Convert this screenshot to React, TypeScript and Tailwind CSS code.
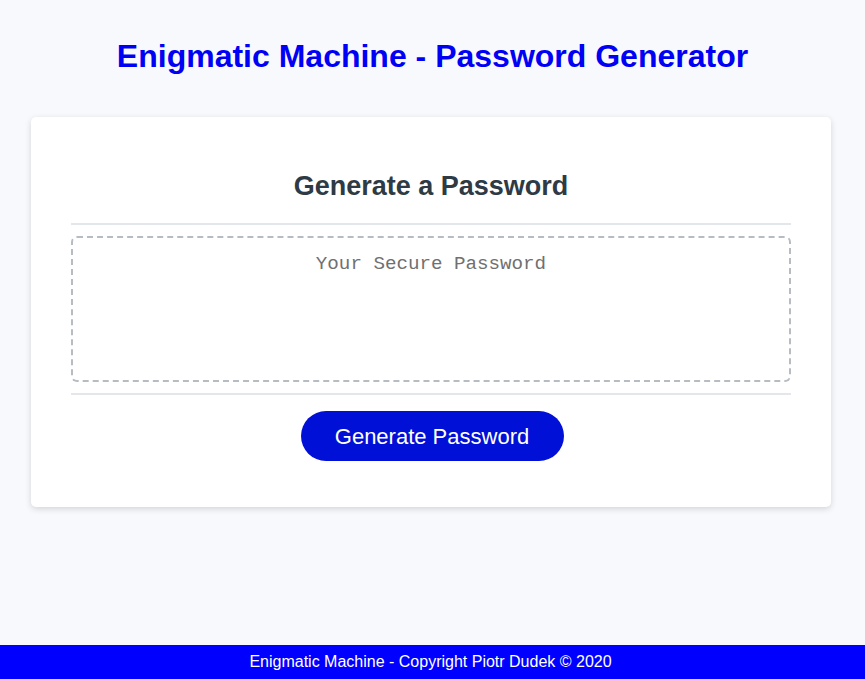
import React from 'react';

export default function App() {
  return (
    <div className="min-h-screen flex flex-col bg-[#f8f9fd] font-['Liberation_Sans',Arial,sans-serif]">
      <header className="pt-[38px] text-center">
        <h1 className="text-[32px] leading-[37px] font-bold text-[#0000f5]">
          Enigmatic Machine - Password Generator
        </h1>
      </header>

      <main className="mt-[42px] pl-[31px]">
        <div className="w-[800px] bg-white rounded-[5px] shadow-[0_2px_6px_rgba(0,0,0,0.15)] px-10 pt-[54px] pb-[46px]">
          <h2 className="text-center text-[27px] leading-[30px] font-bold text-[#2e3a44]">
            Generate a Password
          </h2>
          <hr className="mt-[22px] border-0 h-[2px] bg-[#e3e6ea]" />
          <div className="mt-[11px] h-[146px] border-2 border-dashed border-[#b7bcc3] rounded-[6px] pt-[14px] text-center">
            <p className="font-['Liberation_Mono','Courier_New',monospace] text-[19.2px] leading-[24px] text-[#707070]">
              Your Secure Password
            </p>
          </div>
          <hr className="mt-[11px] border-0 h-[2px] bg-[#e3e6ea]" />
          <div className="mt-4 flex justify-center pl-[2px]">
            <button className="h-[50px] w-[263px] rounded-full bg-[#0010d6] text-white text-[22px]">
              Generate Password
            </button>
          </div>
        </div>
      </main>

      <footer className="mt-auto h-[34px] flex items-center justify-center bg-[#0000ff] text-white text-[16px] pr-[4px]">
        Enigmatic Machine - Copyright Piotr Dudek © 2020
      </footer>
    </div>
  );
}
